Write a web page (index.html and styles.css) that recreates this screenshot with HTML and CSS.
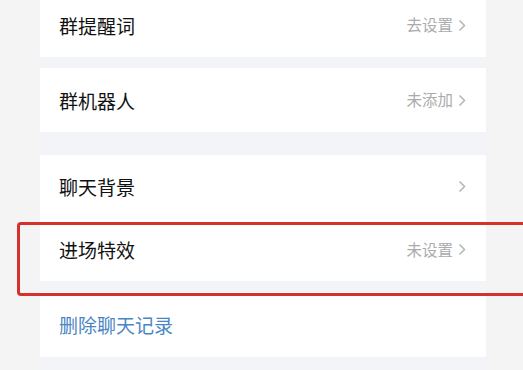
FILE: index.html
```html
<!DOCTYPE html>
<html lang="zh-CN">
<head>
<meta charset="utf-8">
<link rel="stylesheet" href="styles.css">
</head>
<body>
<div class="screen">
  <div class="card">
    <div class="row"><span class="label">群提醒词</span><span class="value">去设置<svg class="chev" viewBox="0 0 8 13"><polyline points="1.5,1.5 6.5,6.5 1.5,11.5"/></svg></span></div>
  </div>
  <div class="card">
    <div class="row"><span class="label">群机器人</span><span class="value">未添加<svg class="chev" viewBox="0 0 8 13"><polyline points="1.5,1.5 6.5,6.5 1.5,11.5"/></svg></span></div>
  </div>
  <div class="card group">
    <div class="row half"><span class="label">聊天背景</span><span class="value"><svg class="chev" viewBox="0 0 8 13"><polyline points="1.5,1.5 6.5,6.5 1.5,11.5"/></svg></span></div>
    <div class="row half"><span class="label">进场特效</span><span class="value">未设置<svg class="chev" viewBox="0 0 8 13"><polyline points="1.5,1.5 6.5,6.5 1.5,11.5"/></svg></span></div>
  </div>
  <div class="card last">
    <div class="row tall"><span class="label danger">删除聊天记录</span></div>
  </div>
</div>
<div class="highlight"></div>
</body>
</html>
```
FILE: styles.css
```css
html, body {
  margin: 0;
  padding: 0;
  height: 100%;
  overflow: hidden;
}
body {
  background: #f4f4f4;
  font-family: "Noto Sans CJK SC", "Noto Sans", sans-serif;
  position: relative;
}
.screen {
  margin-top: -7px;
  margin-left: 40px;
  width: 446px;
  height: 377px;
  background: #f3f4f8;
  display: flex;
  flex-direction: column;
  gap: 11px;
}
.card {
  background: #ffffff;
  display: flex;
  flex-direction: column;
}
.card.group {
  margin-top: 12px;
}
.row {
  height: 64px;
  display: flex;
  align-items: center;
  justify-content: space-between;
  padding: 0 20px 0 19px;
}
.row.half {
  height: 63px;
}
.row.tall {
  height: 65px;
}
.label {
  font-size: 19px;
  color: #111111;
  line-height: 1;
}
.label.danger {
  color: #4a86c4;
}
.value {
  display: flex;
  align-items: center;
  gap: 5px;
  font-size: 15.5px;
  color: #ababab;
  line-height: 1;
}
.chev {
  width: 8px;
  height: 13px;
  fill: none;
  stroke: #b4b4b4;
  stroke-width: 1.5;
}
.highlight {
  position: absolute;
  left: 17px;
  top: 222px;
  width: 520px;
  height: 68px;
  border: 3px solid #d3322c;
  border-radius: 4px;
}
```
